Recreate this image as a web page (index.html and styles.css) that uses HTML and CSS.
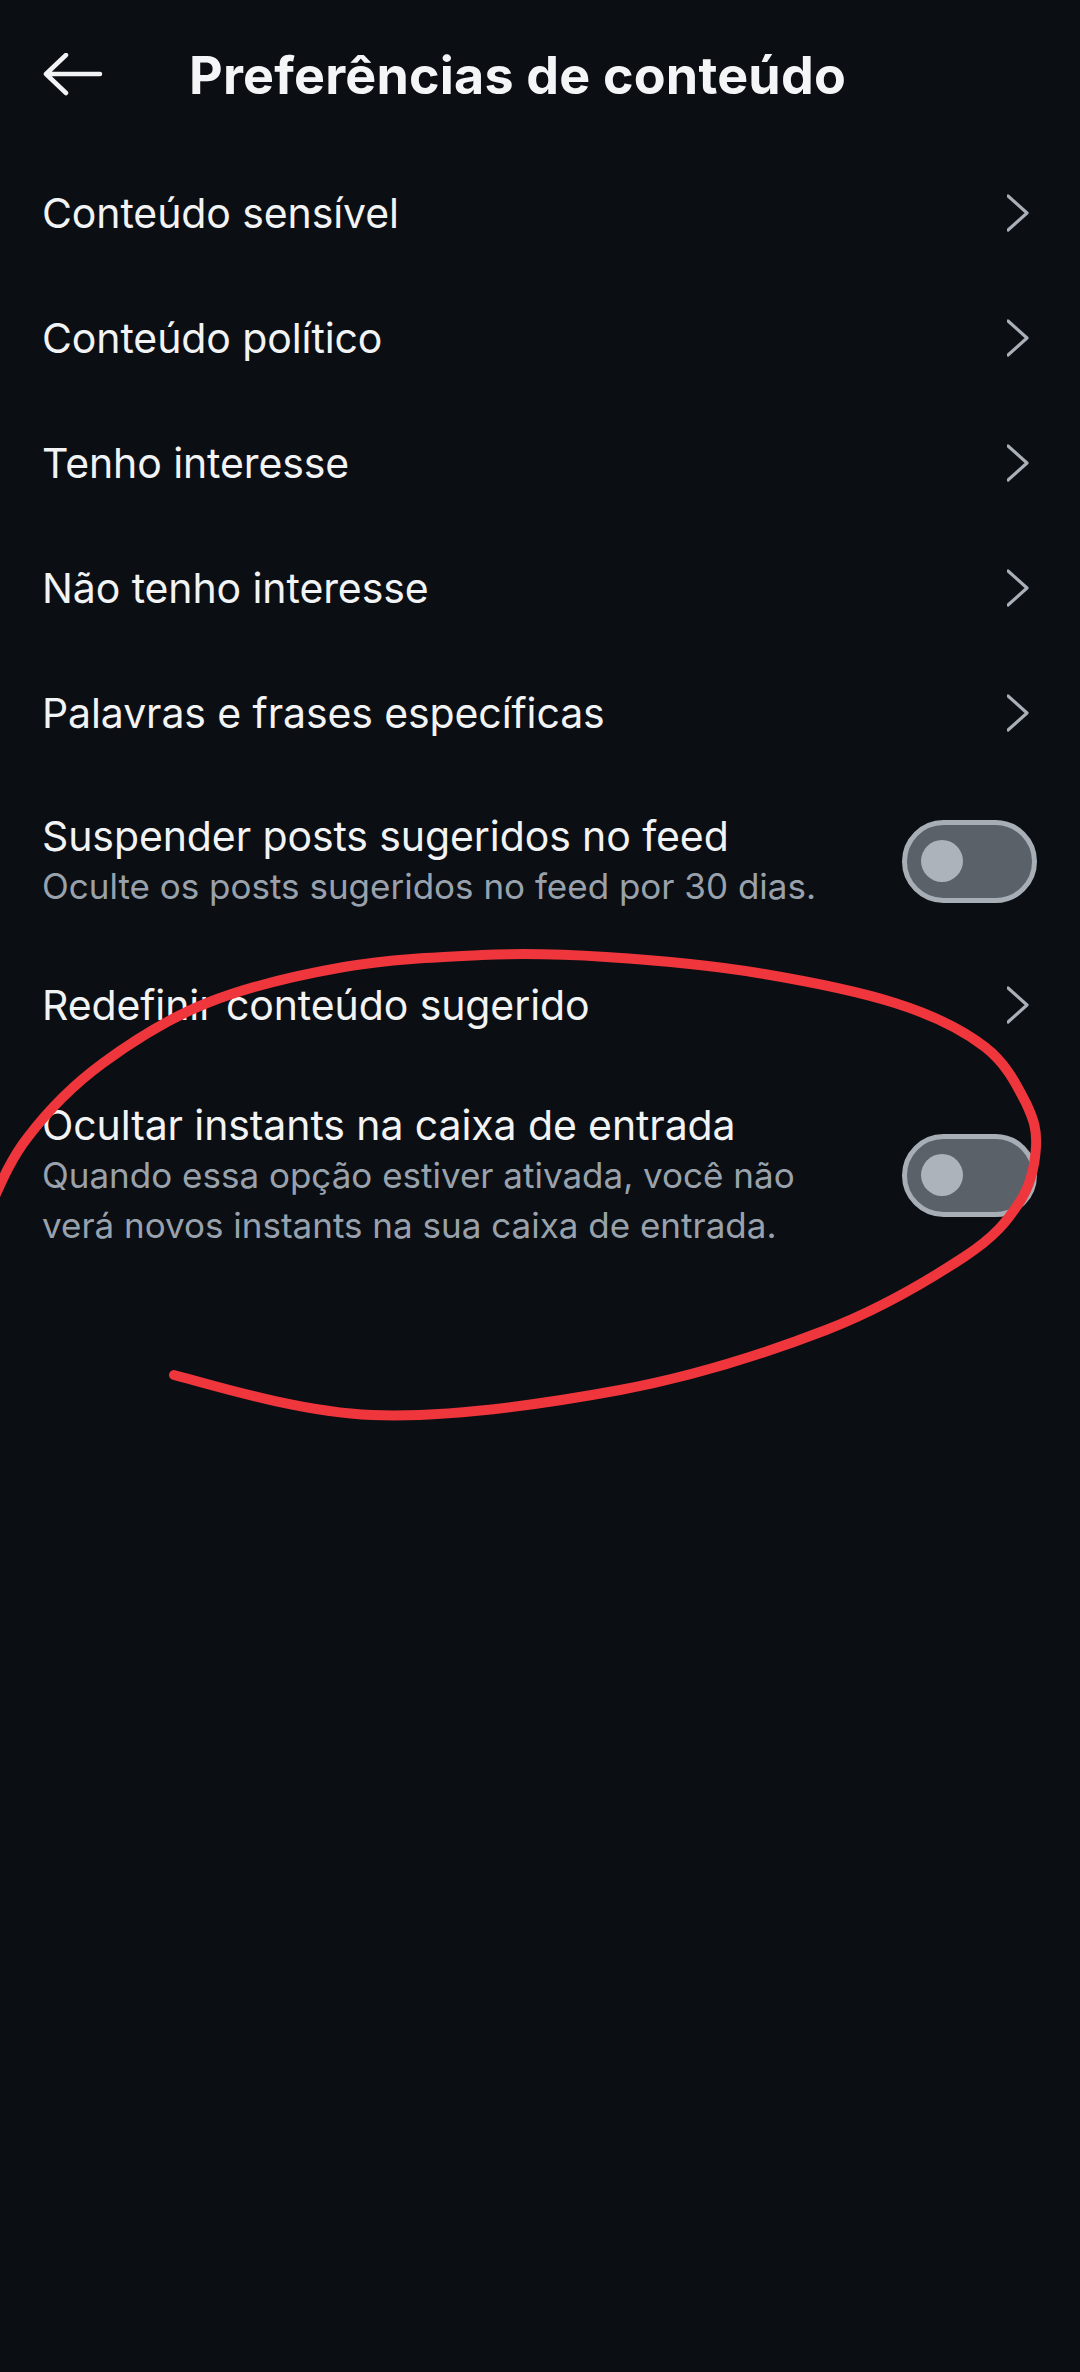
FILE: index.html
```html
<!DOCTYPE html>
<html lang="pt-BR">
<head>
<meta charset="utf-8">
<title>Preferências de conteúdo</title>
<link rel="stylesheet" href="styles.css">
</head>
<body>
<div class="screen">
  <header class="topbar">
    <svg class="back" width="60" height="44" viewBox="0 0 60 44" aria-hidden="true">
      <path d="M57 21H3M23 2L3 21L23 40" fill="none" stroke="#f2f3f4" stroke-width="4.5" stroke-linecap="round" stroke-linejoin="round"/>
    </svg>
    <h1 class="title">Preferências de conteúdo</h1>
  </header>

  <ul class="list">
    <li class="row nav"><span class="label">Conteúdo sensível</span><svg class="chev" width="30" height="40" viewBox="0 0 30 40"><path d="M1 3L20 20L1 37" fill="none" stroke="#a9b0b8" stroke-width="3.2" stroke-linecap="round" stroke-linejoin="round"/></svg></li>
    <li class="row nav"><span class="label">Conteúdo político</span><svg class="chev" width="30" height="40" viewBox="0 0 30 40"><path d="M1 3L20 20L1 37" fill="none" stroke="#a9b0b8" stroke-width="3.2" stroke-linecap="round" stroke-linejoin="round"/></svg></li>
    <li class="row nav"><span class="label">Tenho interesse</span><svg class="chev" width="30" height="40" viewBox="0 0 30 40"><path d="M1 3L20 20L1 37" fill="none" stroke="#a9b0b8" stroke-width="3.2" stroke-linecap="round" stroke-linejoin="round"/></svg></li>
    <li class="row nav"><span class="label">Não tenho interesse</span><svg class="chev" width="30" height="40" viewBox="0 0 30 40"><path d="M1 3L20 20L1 37" fill="none" stroke="#a9b0b8" stroke-width="3.2" stroke-linecap="round" stroke-linejoin="round"/></svg></li>
    <li class="row nav"><span class="label">Palavras e frases específicas</span><svg class="chev" width="30" height="40" viewBox="0 0 30 40"><path d="M1 3L20 20L1 37" fill="none" stroke="#a9b0b8" stroke-width="3.2" stroke-linecap="round" stroke-linejoin="round"/></svg></li>
    <li class="row setting first">
      <div class="texts">
        <span class="label">Suspender posts sugeridos no feed</span>
        <span class="sub">Oculte os posts sugeridos no feed por 30 dias.</span>
      </div>
      <span class="toggle"><span class="knob"></span></span>
    </li>
    <li class="row nav"><span class="label">Redefinir conteúdo sugerido</span><svg class="chev" width="30" height="40" viewBox="0 0 30 40"><path d="M1 3L20 20L1 37" fill="none" stroke="#a9b0b8" stroke-width="3.2" stroke-linecap="round" stroke-linejoin="round"/></svg></li>
    <li class="row setting">
      <div class="texts">
        <span class="label">Ocultar instants na caixa de entrada</span>
        <span class="sub">Quando essa opção estiver ativada, você não verá novos instants na sua caixa de entrada.</span>
      </div>
      <span class="toggle"><span class="knob"></span></span>
    </li>
  </ul>

  <svg class="scribble" width="1080" height="2372" viewBox="0 0 1080 2372" aria-hidden="true">
    <path d="M174 1375 C 209 1384 298 1412 372 1415 C 446 1418 544 1404 620 1390 C 696 1376 769 1352 826 1330 C 883 1308 932 1278 964 1257 C 996 1236 1007 1221 1019 1203 C 1031 1185 1035 1164 1036 1147 C 1037 1130 1034 1120 1026 1103 C 1017 1086 1007 1064 985 1047 C 963 1030 933 1015 895 1003 C 857 991 806 981 758 973 C 710 965 652 960 606 957 C 560 954 526 953 482 955 C 438 957 390 959 344 967 C 298 975 247 987 207 1003 C 167 1019 133 1041 103 1063 C 73 1085 47 1112 28 1137 C 9 1161 -2 1190 -12 1212" fill="none" stroke="#ee363c" stroke-width="10" stroke-linecap="round" stroke-linejoin="round"/>
  </svg>
</div>
</body>
</html>
```

FILE: styles.css
```css
html, body {
  margin: 0;
  padding: 0;
  background: #0b0e13;
}

.screen {
  position: relative;
  width: 1080px;
  min-height: 2372px;
  background: #0b0e13;
  color: #f2f3f4;
  font-family: "Inter", "Noto Sans", sans-serif;
  overflow: hidden;
}

.topbar {
  height: 150px;
  display: flex;
  align-items: center;
  padding-left: 43px;
  gap: 86px;
}

.back {
  display: block;
  flex: none;
}

.title {
  margin: 0;
  font-size: 52px;
  font-weight: 700;
  letter-spacing: 0.2px;
  color: #f4f5f6;
}

.list {
  list-style: none;
  margin: 0;
  padding: 0;
}

.row {
  display: flex;
  align-items: center;
  justify-content: space-between;
  padding: 0 43px 0 42px;
}

.row.nav {
  height: 125px;
}

.row.setting {
  padding-top: 33px;
  padding-bottom: 34px;
}

.row.setting.first {
  padding-top: 36px;
  padding-bottom: 31px;
}

.label {
  font-size: 41px;
  line-height: 50px;
  color: #f2f3f4;
  letter-spacing: -0.1px;
}

.texts {
  display: flex;
  flex-direction: column;
  max-width: 810px;
}

.sub {
  font-size: 35px;
  line-height: 50px;
  color: #99a2ac;
}

.chev {
  display: block;
  flex: none;
}

.toggle {
  flex: none;
  box-sizing: border-box;
  width: 135px;
  height: 83px;
  border: 5px solid #a7aeb6;
  border-radius: 42px;
  background: #5a6169;
  display: flex;
  align-items: center;
  padding-left: 14px;
}

.knob {
  width: 42px;
  height: 42px;
  border-radius: 50%;
  background: #acb3bb;
}

.scribble {
  position: absolute;
  left: 0;
  top: 0;
  pointer-events: none;
}
```
